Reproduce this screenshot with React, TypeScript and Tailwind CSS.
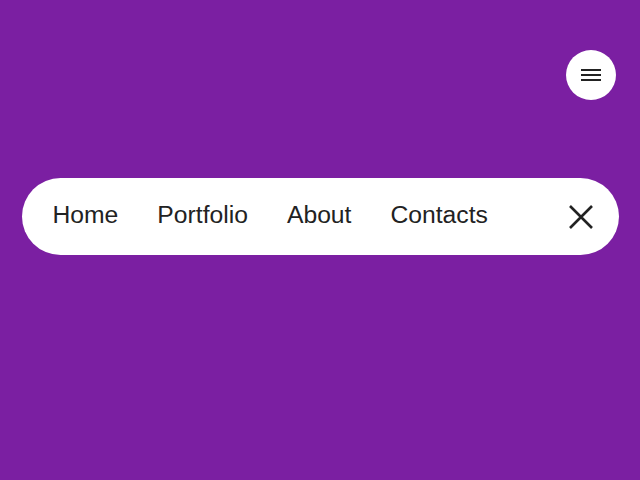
import React, { useState } from 'react';

const links = ['Home', 'Portfolio', 'About', 'Contacts'];

const App: React.FC = () => {
  const [open, setOpen] = useState(true);

  return (
    <div className="min-h-[480px] w-full bg-[#7b1fa2] font-['Liberation_Sans',Arial,sans-serif]">
      {/* Top-right toggle */}
      <div className="flex justify-end pt-[50px] pr-[24px]">
        <button
          onClick={() => setOpen(!open)}
          className="flex h-[50px] w-[50px] items-center justify-center rounded-full bg-white"
          aria-label="Menu"
        >
          <svg width="20" height="12" viewBox="0 0 20 12">
            <rect x="0" y="0" width="20" height="2" fill="#222" />
            <rect x="0" y="5" width="20" height="2" fill="#222" />
            <rect x="0" y="10" width="20" height="2" fill="#222" />
          </svg>
        </button>
      </div>

      {/* Nav bar */}
      {open && (
        <nav className="mt-[78px] ml-[22px] mr-[21px] flex h-[77px] items-center rounded-full bg-white pl-[11px] pr-[26px]">
          <ul className="flex items-center pb-[3px]">
            {links.map((link) => (
              <li key={link}>
                <a href="#" className="block px-[19.5px] text-[24.7px] leading-none text-[#222]">
                  {link}
                </a>
              </li>
            ))}
          </ul>
          <button onClick={() => setOpen(false)} className="ml-auto p-0" aria-label="Close">
            <svg width="24" height="24" viewBox="0 0 24 24" fill="none" stroke="#222" strokeWidth="2.6">
              <path d="M1 1L23 23M23 1L1 23" />
            </svg>
          </button>
        </nav>
      )}
    </div>
  );
};

export default App;
